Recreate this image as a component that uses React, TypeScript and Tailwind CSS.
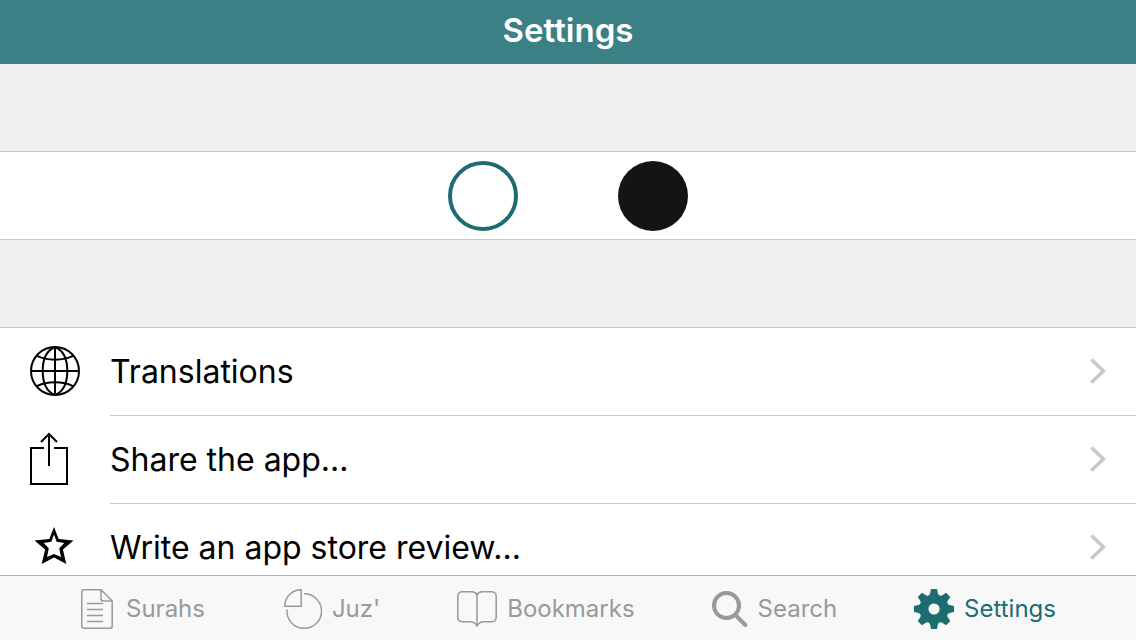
import type { ReactNode } from "react";

const teeth = [0, 45, 90, 135, 180, 225, 270, 315];

function GlobeIcon() {
  return (
    <svg className="size-[50px]" viewBox="0 0 50 50" fill="none" stroke="currentColor" strokeWidth="2" aria-hidden="true">
      <circle cx="25" cy="25" r="24" />
      <path d="M25 1v48M1 25h48" />
      <path d="M25 1C15 5 12.700 15 12.700 25S15 45 25 49M25 1c10 4 12.300 14 12.300 24S35 45 25 49" />
      <path d="M6.500 9.700c10.500 5.300 26.500 5.300 37 0M6.500 40.300c10.500-5.300 26.500-5.300 37 0" />
    </svg>
  );
}

function ShareIcon() {
  return (
    <svg className="h-[54px] w-[38px]" viewBox="0 0 38 54" fill="none" stroke="currentColor" strokeWidth="2" aria-hidden="true">
      <path d="M14 16H1v36h36V16H24" />
      <path d="M19 34V2M11 10l8-8 8 8" />
    </svg>
  );
}

function StarIcon() {
  return (
    <svg className="ml-1 h-10 w-10" viewBox="0 0 40 40" aria-hidden="true">
      <path
        fill="currentColor"
        fillRule="evenodd"
        d="M20 0L24.700 12 39.500 13.500 28.900 22.600 32.300 37 20 30.500 7.700 37 11.100 22.600.5 13.500 15.300 12zM20 7.500L17.400 14.700 9.700 15.900 14.800 21.200 13 30.100 20 26.900 27 30.100 25.200 21.200 30.300 15.900 22.600 14.700z"
      />
    </svg>
  );
}

function ChevronIcon() {
  return (
    <svg className="h-[26px] w-4" viewBox="0 0 16 26" fill="none" stroke="#c7c7cc" strokeWidth="3.500" aria-hidden="true">
      <path d="M1.300 1.500L13.500 13l-12.200 11.500" />
    </svg>
  );
}

function PageIcon() {
  return (
    <svg className="h-10 w-9" viewBox="0 0 36 40" fill="none" stroke="currentColor" strokeWidth="1.500" aria-hidden="true">
      <path d="M4 .8h17L32.200 12v25a2.200 2.200 0 0 1-2.200 2.200H4A2.200 2.200 0 0 1 1.800 37V3A2.200 2.200 0 0 1 4 .8zM21 .8V9.500a2.500 2.500 0 0 0 2.500 2.500h8.500" />
      <path d="M7 14.500h16M7 20.500h16M7 26.500h16M7 32.500h16" />
    </svg>
  );
}

function PieIcon() {
  return (
    <svg className="h-10 w-10" viewBox="0 0 40 40" fill="none" stroke="currentColor" strokeWidth="1.500" aria-hidden="true">
      <path d="M19.200.8v16.500H2.800C2.800 8 10 .8 19.200.8z" />
      <path d="M22 4.800A17.300 17.300 0 1 1 5 20.500" />
    </svg>
  );
}

function BookIcon() {
  return (
    <svg className="h-9 w-10" viewBox="0 0 40 36" fill="none" stroke="currentColor" strokeWidth="1.500" aria-hidden="true">
      <path d="M20 4C19 1.800 17.500.8 15 .8H5A4.200 4.200 0 0 0 .8 5v21.500A4.200 4.200 0 0 0 5 30.700h8c3.500 0 5.500 1.300 7 4.300 1.500-3 3.500-4.300 7-4.300h8a4.200 4.200 0 0 0 4.200-4.200V5A4.200 4.200 0 0 0 35 .8H25C22.500.8 21 1.800 20 4z" />
      <path d="M20 4v31" />
    </svg>
  );
}

function SearchIcon() {
  return (
    <svg className="size-9" viewBox="0 0 36 36" fill="none" stroke="currentColor" aria-hidden="true">
      <circle cx="14.500" cy="14.500" r="12.500" strokeWidth="4" />
      <path d="M23.500 24l9.800 10" strokeWidth="4" strokeLinecap="round" />
    </svg>
  );
}

function GearIcon() {
  return (
    <svg className="size-10" viewBox="0 0 40 40" aria-hidden="true">
      <circle cx="20" cy="20" r="9.900" fill="none" stroke="currentColor" strokeWidth="8.600" />
      {teeth.map((angle) => (
        <path key={angle} transform={`rotate(${angle} 20 20)`} fill="currentColor" d="M17 0h6l.9 4.400q.4 1.700 2.400 2.800L24 10h-8l-2.300-2.800q2-1.100 2.400-2.800z" />
      ))}
    </svg>
  );
}

const rows: { label: string; icon: ReactNode }[] = [
  { label: "Translations", icon: <GlobeIcon /> },
  { label: "Share the app...", icon: <ShareIcon /> },
  { label: "Write an app store review...", icon: <StarIcon /> },
];

const tabs: { label: string; icon: ReactNode; active?: boolean }[] = [
  { label: "Surahs", icon: <PageIcon /> },
  { label: "Juz'", icon: <PieIcon /> },
  { label: "Bookmarks", icon: <BookIcon /> },
  { label: "Search", icon: <SearchIcon /> },
  { label: "Settings", icon: <GearIcon />, active: true },
];

export default function App() {
  return (
    <div className="flex h-screen flex-col bg-[#efefef] font-['Inter','Liberation_Sans',sans-serif] text-black">
      <header className="flex h-16 shrink-0 items-center justify-center bg-[#3b8084] pb-1">
        <h1 className="text-[33px] leading-10 font-semibold text-white">Settings</h1>
      </header>

      <main className="min-h-0 flex-1 overflow-hidden">
        <fieldset className="mt-[87px] flex h-[89px] items-center justify-center gap-[100px] border-y border-[#c8c7cc] bg-white">
          <input
            type="radio"
            name="theme"
            aria-label="Light theme"
            defaultChecked
            className="size-[70px] appearance-none rounded-full bg-white checked:border-4 checked:border-[#1c6c70]"
          />
          <input
            type="radio"
            name="theme"
            aria-label="Dark theme"
            className="size-[70px] appearance-none rounded-full bg-[#141414] checked:border-4 checked:border-[#1c6c70]"
          />
        </fieldset>

        <ul className="mt-[87px] border-t border-[#c8c7cc] bg-white">
          {rows.map((row) => (
            <li key={row.label}>
              <button type="button" className="flex h-[88px] w-full items-center pl-[30px] text-left">
                <span className="flex w-20 shrink-0 items-center pb-0.5">{row.icon}</span>
                <span className="flex h-full flex-1 items-center justify-between border-b border-[#c8c7cc] pr-[30px] pb-0.5">
                  <span className="pt-0.5 text-[32px] leading-10">{row.label}</span>
                  <ChevronIcon />
                </span>
              </button>
            </li>
          ))}
        </ul>
      </main>

      <nav className="flex h-[65px] shrink-0 items-center justify-between border-t border-[#b2b2b2] bg-[#f8f8f8] px-20 pt-0.5">
        {tabs.map((tab) => (
          <button
            key={tab.label}
            type="button"
            aria-current={tab.active ? "page" : undefined}
            className={tab.active ? "flex items-center gap-2.5 text-[#1c6c70]" : "flex items-center gap-2.5 text-[#999999]"}
          >
            {tab.icon}
            <span className="text-2xl">{tab.label}</span>
          </button>
        ))}
      </nav>
    </div>
  );
}
